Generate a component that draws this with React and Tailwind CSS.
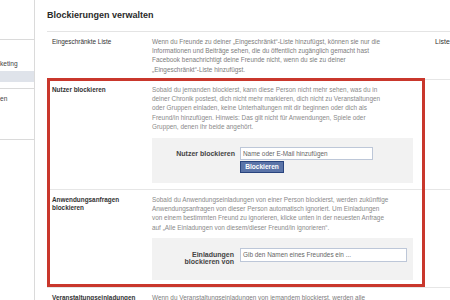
import React from "react";

function Lines({ lines }) {
  return (
    <>
      {lines.map((l, i) => (
        <div key={i} className="whitespace-nowrap">
          {l}
        </div>
      ))}
    </>
  );
}

export default function App() {
  return (
    <div className="w-[450px] h-[300px] overflow-hidden bg-white flex font-['Liberation_Sans',Arial,sans-serif] text-[#333]">
      <aside className="w-[35px] shrink-0 border-r border-[#dadada] flex flex-col overflow-hidden">
        <div className="h-[39px]" />
        <div className="border-t border-[#dadada] h-[32px] pt-[19px] text-[6.6px] leading-[9px] text-[#444] whitespace-nowrap">
          keting
        </div>
        <div className="h-[11px] bg-[#dfe3ea]" />
        <div className="h-[6px]" />
        <div className="border-t border-[#dadada] h-[51px] pt-[5px] text-[6.6px] leading-[9px] text-[#444] whitespace-nowrap">
          en
        </div>
        <div className="border-t border-[#dadada]" />
      </aside>

      <main className="flex-1 min-w-0 pl-[12px] relative">
        <div className="h-[32px] border-b border-[#e4e4e4] flex items-center text-[9px] font-bold text-[#2a2a2a] whitespace-nowrap">
          Blockierungen verwalten
        </div>

        {/* Row 1 */}
        <div className="flex h-[48px] border-b border-[#e6e6e6] pt-[5px]">
          <div className="w-[105px] shrink-0 pl-[5px] text-[6.4px] leading-[9.2px] text-[#333] whitespace-nowrap">
            Eingeschränkte Liste
          </div>
          <div className="w-[283px] shrink-0 text-[6.4px] leading-[9.2px] text-[#7d7d7d]">
            <Lines
              lines={[
                "Wenn du Freunde zu deiner „Eingeschränkt“-Liste hinzufügst, können sie nur die",
                "Informationen und Beiträge sehen, die du öffentlich zugänglich gemacht hast",
                "Facebook benachrichtigt deine Freunde nicht, wenn du sie zu deiner",
                "„Eingeschränkt“-Liste hinzufügst.",
              ]}
            />
          </div>
          <div className="text-[7px] leading-[9.2px] text-[#333] whitespace-nowrap">
            Liste
          </div>
        </div>

        {/* Row 2 */}
        <div className="flex h-[110px] border-b border-[#e6e6e6] pt-[5px]">
          <div className="w-[105px] shrink-0 pl-[5px] text-[6.4px] leading-[9.2px] font-bold text-[#333] whitespace-nowrap">
            Nutzer blockieren
          </div>
          <div className="w-[283px] shrink-0">
            <div className="text-[6.4px] leading-[9.2px] text-[#8a8a8a]">
              <Lines
                lines={[
                  "Sobald du jemanden blockierst, kann diese Person nicht mehr sehen, was du in",
                  "deiner Chronik postest, dich nicht mehr markieren, dich nicht zu Veranstaltungen",
                  "oder Gruppen einladen, keine Unterhaltungen mit dir beginnen oder dich als",
                  "Freund/in hinzufügen. Hinweis: Das gilt nicht für Anwendungen, Spiele oder",
                  "Gruppen, denen ihr beide angehört.",
                ]}
              />
            </div>
            <div className="mt-[7px] w-[261px] h-[45px] bg-[#f2f2f2] flex pt-[9px]">
              <div className="w-[83px] shrink-0 text-right pt-[2px] text-[7px] leading-[9px] font-bold text-[#444] whitespace-nowrap">
                Nutzer blockieren
              </div>
              <div className="ml-[5px] flex flex-col items-start">
                <div className="w-[133px] h-[13px] border border-[#bdc7d8] bg-white px-[2px] text-[6.4px] leading-[11px] text-[#666] whitespace-nowrap">
                  Name oder E-Mail hinzufügen
                </div>
                <div className="mt-[1px] w-[44px] h-[12px] bg-[#5b74a8] border border-[#29447e] text-white text-[6.6px] font-bold leading-[10px] text-center">
                  Blockieren
                </div>
              </div>
            </div>
          </div>
        </div>

        {/* Row 3 */}
        <div className="flex h-[98px] border-b border-[#e6e6e6] pt-[5px]">
          <div className="w-[105px] shrink-0 pl-[5px] pt-[1px] text-[6.4px] leading-[7.5px] font-bold text-[#333] whitespace-nowrap">
            Anwendungsanfragen
            <br />
            blockieren
          </div>
          <div className="w-[283px] shrink-0">
            <div className="text-[6.4px] leading-[9.2px] text-[#8a8a8a]">
              <Lines
                lines={[
                  "Sobald du Anwendungseinladungen von einer Person blockierst, werden zukünftige",
                  "Anwendungsanfragen von dieser Person automatisch ignoriert. Um Einladungen",
                  "von einem bestimmten Freund zu ignorieren, klicke unten in der neuesten Anfrage",
                  "auf „Alle Einladungen von diesem/dieser Freund/in ignorieren“.",
                ]}
              />
            </div>
            <div className="mt-[6px] w-[261px] h-[42px] bg-[#f2f2f2] flex pt-[10px]">
              <div className="w-[82px] shrink-0 text-right pt-[3px] text-[7px] leading-[7.5px] font-bold text-[#444] whitespace-nowrap">
                Einladungen
                <br />
                blockieren von
              </div>
              <div className="ml-[6px]">
                <div className="w-[167px] h-[14px] border border-[#bdc7d8] bg-white px-[2px] text-[6.4px] leading-[12px] text-[#666] whitespace-nowrap">
                  Gib den Namen eines Freundes ein ...
                </div>
              </div>
            </div>
          </div>
        </div>

        {/* Row 4 */}
        <div className="flex pt-[5px]">
          <div className="w-[105px] shrink-0 pl-[5px] text-[6.4px] leading-[9.2px] font-bold text-[#333] whitespace-nowrap">
            Veranstaltungseinladungen
          </div>
          <div className="w-[283px] shrink-0 text-[6.4px] leading-[9.2px] text-[#7d7d7d] whitespace-nowrap">
            Wenn du Veranstaltungseinladungen von jemandem blockierst, werden alle
          </div>
        </div>

        <div className="absolute left-[12px] top-[78px] w-[378px] h-[209px] border-[3px] border-[#c9372c] pointer-events-none" />
      </main>
    </div>
  );
}
